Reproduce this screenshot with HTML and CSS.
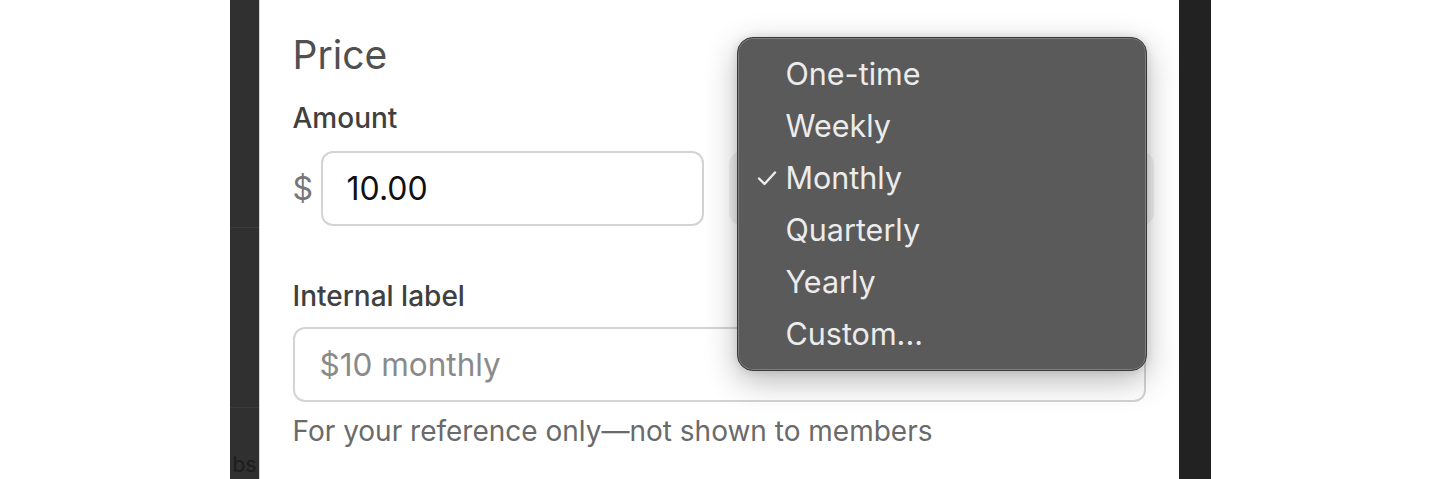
FILE: index.html
```html
<!DOCTYPE html>
<html lang="en">
<head>
<meta charset="utf-8">
<title>Price</title>
<link rel="stylesheet" href="styles.css">
</head>
<body>
<div class="stage">
  <aside class="side-left">
    <div class="side-row side-row-1"></div>
    <div class="side-row side-row-2"></div>
    <div class="side-row side-row-3"><span class="side-text">bs</span></div>
  </aside>
  <section class="modal">
    <h2 class="title">Price</h2>
    <label class="field-label">Amount</label>
    <div class="amount-row">
      <span class="currency">$</span>
      <div class="input amount-input">10.00</div>
      <div class="select-bg"></div>
    </div>
    <label class="field-label label-gap">Internal label</label>
    <div class="input label-input"><span class="placeholder">$10 monthly</span></div>
    <p class="helper">For your reference only—not shown to members</p>

    <div class="menu">
      <div class="menu-item">One-time</div>
      <div class="menu-item">Weekly</div>
      <div class="menu-item checked">
        <svg class="check" width="20" height="16" viewBox="0 0 20 16"><polyline points="2,8.5 7.5,14 18,2.5" fill="none" stroke="#ececec" stroke-width="2.4" stroke-linecap="round" stroke-linejoin="round"/></svg>
        Monthly
      </div>
      <div class="menu-item">Quarterly</div>
      <div class="menu-item">Yearly</div>
      <div class="menu-item">Custom...</div>
    </div>
  </section>
  <aside class="side-right"></aside>
</div>
</body>
</html>
```

FILE: styles.css
```css
html, body {
  margin: 0;
  padding: 0;
  background: #ffffff;
}
body {
  font-family: Inter, "Noto Sans", "Liberation Sans", sans-serif;
}
.stage {
  width: 981px;
  height: 479px;
  margin: 0 auto;
  display: flex;
  overflow: hidden;
}
.side-left {
  width: 29px;
  flex: none;
  background: #303030;
  display: flex;
  flex-direction: column;
}
.side-row {
  box-sizing: border-box;
  border-bottom: 1px solid #3b3b3b;
}
.side-row-1 { height: 228px; }
.side-row-2 { height: 180px; }
.side-row-3 {
  flex: 1;
  border-bottom: none;
  display: flex;
  justify-content: flex-end;
  align-items: flex-end;
  padding-bottom: 3px;
}
.side-text {
  font-size: 21px;
  line-height: 22px;
  color: #1d1d1d;
  white-space: nowrap;
  margin-right: 2px;
}
.side-right {
  width: 32px;
  flex: none;
  background: #222222;
}
.modal {
  position: relative;
  width: 920px;
  flex: none;
  box-sizing: border-box;
  background: #ffffff;
  border-left: 1px solid #d6d6d6;
  padding: 33px 33px 0 33px;
}
.title {
  margin: 0;
  font-size: 39px;
  line-height: 44px;
  font-weight: 400;
  color: #505050;
}
.field-label {
  display: block;
  margin-top: 25px;
  font-size: 28px;
  line-height: 32px;
  font-weight: 500;
  color: #404040;
}
.label-gap {
  margin-top: 54px;
}
.amount-row {
  display: flex;
  align-items: center;
  margin-top: 17px;
  margin-right: -8px;
}
.currency {
  width: 28px;
  flex: none;
  font-size: 32px;
  color: #777777;
}
.input {
  box-sizing: border-box;
  height: 75px;
  border: 2px solid #d3d3d3;
  border-radius: 12px;
  display: flex;
  align-items: center;
  padding-left: 24px;
  font-size: 32px;
  color: #111111;
  background: #ffffff;
}
.amount-input {
  width: 383px;
  flex: none;
}
.select-bg {
  flex: 1;
  height: 75px;
  margin-left: 25px;
  border-radius: 14px;
  background: #f1f1f1;
}
.label-input {
  margin-top: 15px;
  width: 100%;
  padding-left: 25px;
  font-size: 31.5px;
}
.placeholder {
  color: #8a8a8a;
}
.helper {
  margin: 13px 0 0 0;
  font-size: 28px;
  line-height: 32px;
  color: #6a6a6a;
}
.menu {
  position: absolute;
  left: 477px;
  top: 37px;
  width: 410px;
  box-sizing: border-box;
  padding: 10px 0 10px 0;
  background: #5a5a5a;
  border: 1px solid #3a3a3a;
  border-radius: 16px;
  box-shadow: inset 0 0 0 1px rgba(255,255,255,0.22), 0 10px 32px rgba(0,0,0,0.28), 0 0 8px rgba(0,0,0,0.12);
}
.menu-item {
  position: relative;
  height: 52px;
  line-height: 52px;
  padding-left: 48px;
  font-size: 30.5px;
  color: #ececec;
}
.check {
  position: absolute;
  left: 19px;
  top: 18px;
}
```
